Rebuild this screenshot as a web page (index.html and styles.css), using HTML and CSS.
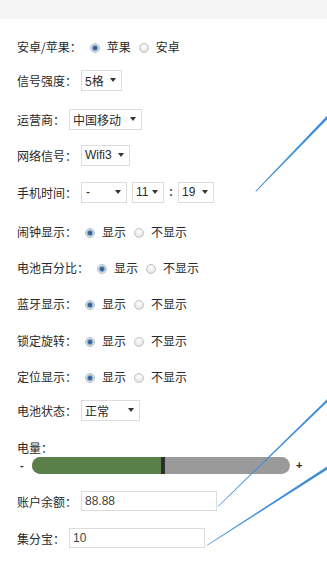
FILE: index.html
```html
<!DOCTYPE html>
<html lang="zh-CN">
<head>
<meta charset="utf-8">
<title>设置</title>
<link rel="stylesheet" href="styles.css">
</head>
<body>
<div class="topbar"></div>
<div class="form">
  <div class="row">
    <span class="label">安卓/苹果：</span>
    <span class="radio checked"></span><span class="opt">苹果</span>
    <span class="radio"></span><span class="opt">安卓</span>
  </div>
  <div class="row">
    <span class="label">信号强度：</span>
    <span class="select w-signal"><span class="val">5格</span><svg class="arrow" width="6" height="4" viewBox="0 0 6 4"><path d="M0 0H6L3 4Z"/></svg></span>
  </div>
  <div class="row">
    <span class="label">运营商：</span>
    <span class="select w-carrier"><span class="val">中国移动</span><svg class="arrow" width="6" height="4" viewBox="0 0 6 4"><path d="M0 0H6L3 4Z"/></svg></span>
  </div>
  <div class="row">
    <span class="label">网络信号：</span>
    <span class="select w-wifi"><span class="val">Wifi3</span><svg class="arrow" width="6" height="4" viewBox="0 0 6 4"><path d="M0 0H6L3 4Z"/></svg></span>
  </div>
  <div class="row">
    <span class="label">手机时间：</span>
    <span class="select w-ampm"><span class="val">-</span><svg class="arrow" width="6" height="4" viewBox="0 0 6 4"><path d="M0 0H6L3 4Z"/></svg></span>
    <span class="select w-hour"><span class="val">11</span><svg class="arrow" width="6" height="4" viewBox="0 0 6 4"><path d="M0 0H6L3 4Z"/></svg></span>
    <span class="colon">:</span>
    <span class="select w-min"><span class="val">19</span><svg class="arrow" width="6" height="4" viewBox="0 0 6 4"><path d="M0 0H6L3 4Z"/></svg></span>
  </div>
  <div class="row">
    <span class="label">闹钟显示：</span>
    <span class="radio checked"></span><span class="opt">显示</span>
    <span class="radio"></span><span class="opt">不显示</span>
  </div>
  <div class="row">
    <span class="label">电池百分比：</span>
    <span class="radio checked"></span><span class="opt">显示</span>
    <span class="radio"></span><span class="opt">不显示</span>
  </div>
  <div class="row">
    <span class="label">蓝牙显示：</span>
    <span class="radio checked"></span><span class="opt">显示</span>
    <span class="radio"></span><span class="opt">不显示</span>
  </div>
  <div class="row">
    <span class="label">锁定旋转：</span>
    <span class="radio checked"></span><span class="opt">显示</span>
    <span class="radio"></span><span class="opt">不显示</span>
  </div>
  <div class="row">
    <span class="label">定位显示：</span>
    <span class="radio checked"></span><span class="opt">显示</span>
    <span class="radio"></span><span class="opt">不显示</span>
  </div>
  <div class="row">
    <span class="label">电池状态：</span>
    <span class="select w-battery"><span class="val">正常</span><svg class="arrow" width="6" height="4" viewBox="0 0 6 4"><path d="M0 0H6L3 4Z"/></svg></span>
  </div>
  <div class="row">
    <span class="label">电量：</span>
  </div>
  <div class="row slider-row">
    <span class="minus">-</span>
    <div class="track">
      <div class="fill" style="width: 50%"></div>
      <div class="handle"></div>
    </div>
    <span class="plus">+</span>
  </div>
  <div class="row">
    <span class="label">账户余额：</span>
    <span class="input">88.88</span>
  </div>
  <div class="row">
    <span class="label">集分宝：</span>
    <span class="input">10</span>
  </div>
</div>
<svg class="rays" width="327" height="577" viewBox="0 0 327 577">
  <polygon class="ray" points="328,114.8 328,118.6 256,191.7 255.5,191.1"/>
  <polygon class="ray" points="340,386.6 340,389.8 218.4,506.4 218,506"/>
  <polygon class="ray" points="331,464 331,467.2 207.4,545.5 207,545"/>
</svg>
</body>
</html>
```

FILE: styles.css
```css
* { box-sizing: border-box; }

html, body {
  margin: 0;
  padding: 0;
  background: #ffffff;
}

body {
  width: 327px;
  height: 577px;
  position: relative;
  overflow: hidden;
  font-family: "Liberation Sans", "Noto Sans CJK SC", sans-serif;
  font-size: 12px;
  color: #2a2a2a;
}

.topbar {
  height: 19px;
  background: #f5f5f5;
  border-bottom: 1px solid #f8f8f8;
}

.form {
  padding: 15px 0 0 17px;
  display: grid;
  grid-template-rows: 34px 39px 36px 37px 39px 36px 36px 37px 36px 34px 37px 18px 36px 37px 24px;
}

.row {
  height: 24px;
  display: flex;
  align-items: center;
  white-space: nowrap;
}

.label {
  font-family: "Noto Sans CJK SC", sans-serif;
}

.opt {
  font-family: "Noto Sans CJK SC", sans-serif;
  margin-left: 7px;
  margin-right: 8px;
}

.radio {
  width: 10px;
  height: 10px;
  border-radius: 50%;
  margin-left: 8px;
  margin-top: 4px;
  border: 1px solid #c4c4c4;
  background: radial-gradient(circle at 50% 35%, #ffffff 0%, #e6e6e6 70%, #d6d6d6 100%);
  flex: none;
}

.radio + .opt + .radio {
  margin-left: 0;
}

.radio.checked {
  border-color: #b8c2cc;
  background: radial-gradient(circle at 50% 50%, #2a5888 0%, #3a70a5 34%, #9fb5c9 48%, #e9eef2 72%, #d8dde2 100%);
}

.select {
  height: 21px;
  margin-left: 4px;
  border: 1px solid #dcdcdc;
  background: #ffffff;
  display: flex;
  align-items: center;
  justify-content: space-between;
  padding: 0 5px 0 3px;
  flex: none;
}

.select .val {
  font-family: "Liberation Sans", "Noto Sans CJK SC", sans-serif;
}

.arrow {
  fill: #333333;
  display: block;
}

.w-signal { width: 41px; }
.w-carrier { width: 73px; }
.w-wifi { width: 49px; }
.w-ampm { width: 46px; }
.w-hour { width: 32px; margin-left: 5px; }
.w-min { width: 36px; margin-left: 0; }
.w-battery { width: 59px; }

.w-ampm .val { padding-left: 1px; }

.colon {
  font-weight: bold;
  color: #444;
  width: 14px;
  text-align: center;
}

.minus {
  width: 15px;
  padding-left: 3px;
  font-family: "Liberation Sans", sans-serif;
  font-weight: bold;
  font-size: 11px;
}

.track {
  width: 258px;
  height: 17px;
  border-radius: 9px;
  background: #9a9a9a;
  display: flex;
  overflow: hidden;
}

.fill {
  height: 100%;
  background: #5b7f48;
}

.handle {
  width: 4px;
  height: 100%;
  background: #2f2f2f;
}

.plus {
  margin-left: 6px;
  font-family: "Liberation Sans", sans-serif;
  font-size: 11px;
  font-weight: bold;
}

.input {
  width: 136px;
  height: 20px;
  margin-left: 4px;
  border: 1px solid #dcdcdc;
  background: #ffffff;
  display: flex;
  align-items: center;
  padding-left: 3px;
  font-family: "Liberation Sans", sans-serif;
  color: #444;
}

.rays {
  position: absolute;
  left: 0;
  top: 0;
  pointer-events: none;
}

.ray {
  fill: #3f8ed8;
}
```
